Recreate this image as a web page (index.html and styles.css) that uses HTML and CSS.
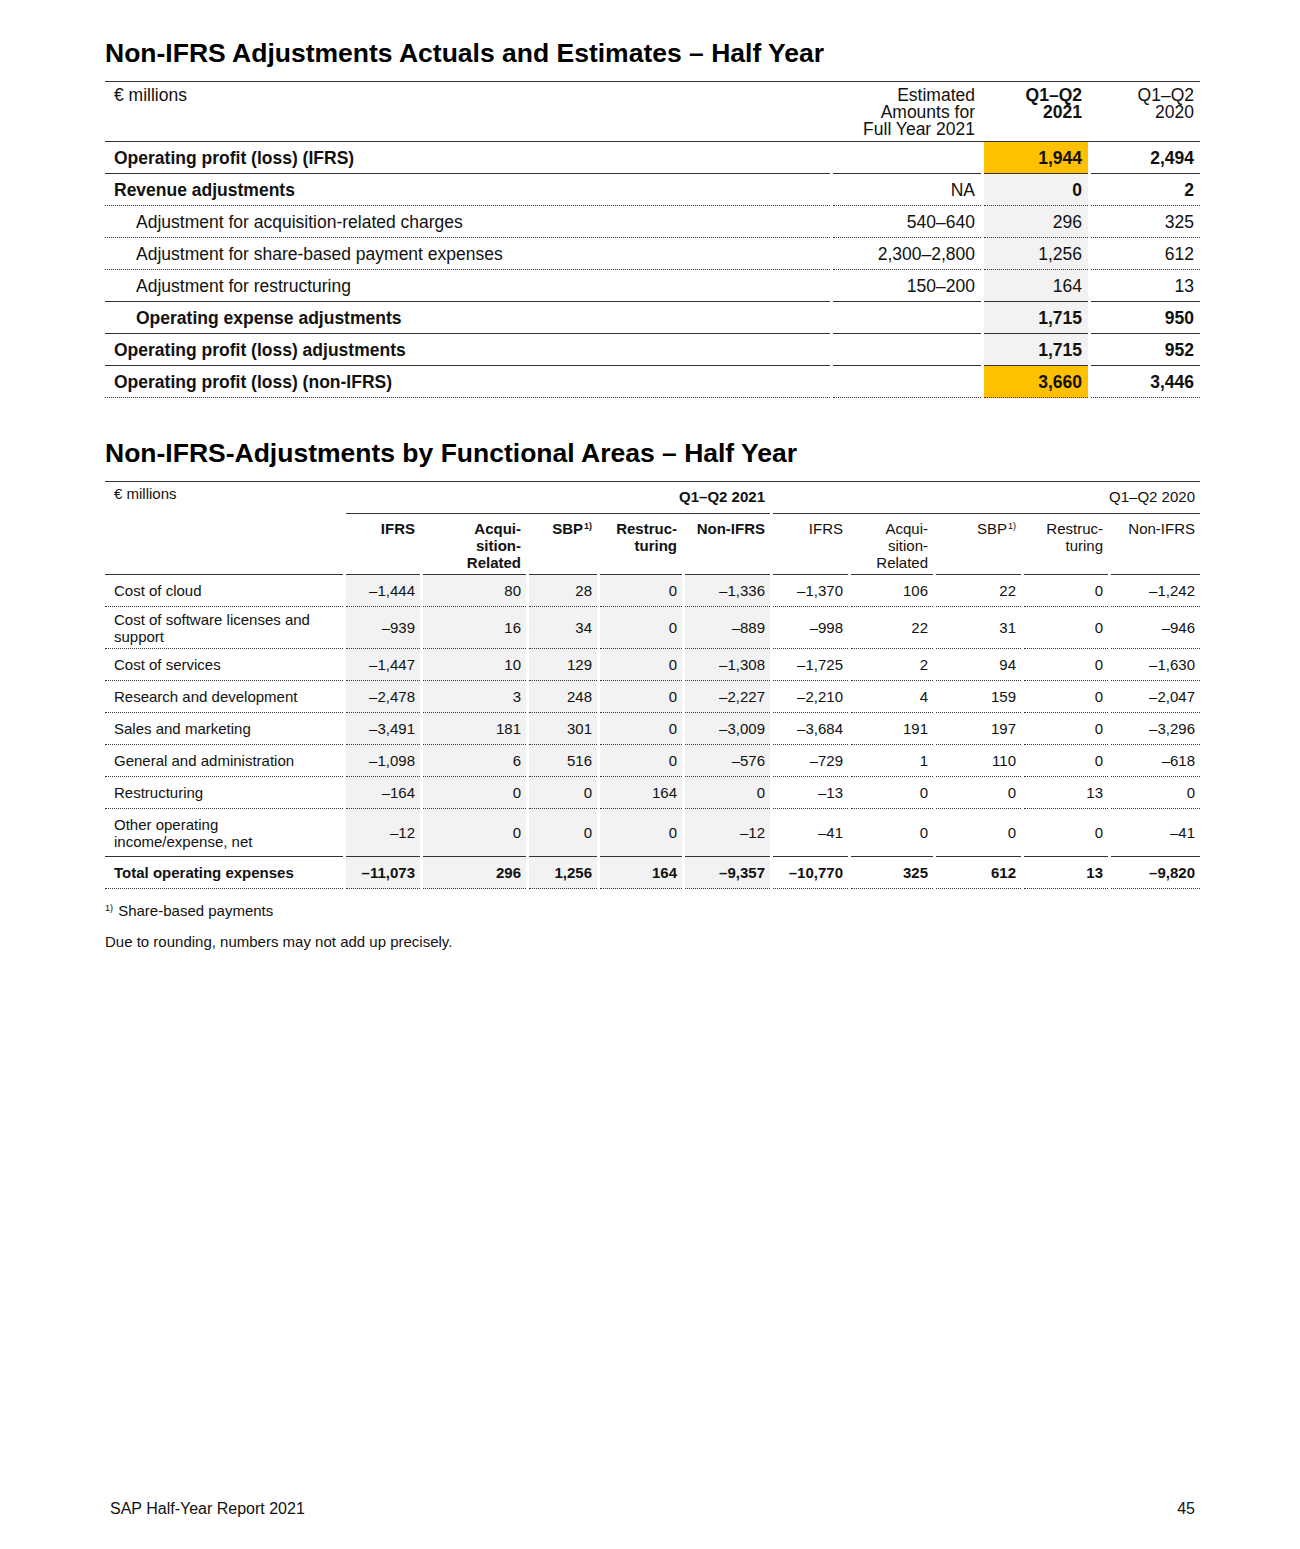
FILE: index.html
```html
<!DOCTYPE html>
<html lang="en">
<head>
<meta charset="utf-8">
<title>SAP Half-Year Report 2021 – Non-IFRS Adjustments</title>
<link rel="stylesheet" href="styles.css">
</head>
<body>
<main class="page">
  <section class="block">
    <h1 class="title">Non-IFRS Adjustments Actuals and Estimates – Half Year</h1>
    <div class="t1">
      <div class="t1-head">
        <div class="cell lbl">€ millions</div>
        <div class="cell num">Estimated<br>Amounts for<br>Full Year 2021</div>
        <div class="cell num b">Q1–Q2<br>2021</div>
        <div class="cell num">Q1–Q2<br>2020</div>
      </div>
      <div class="t1-row solid b">
        <div class="cell lbl">Operating profit (loss) (IFRS)</div>
        <div class="cell num"></div>
        <div class="cell num hl">1,944</div>
        <div class="cell num">2,494</div>
      </div>
      <div class="t1-row dotted b">
        <div class="cell lbl">Revenue adjustments</div>
        <div class="cell num r">NA</div>
        <div class="cell num">0</div>
        <div class="cell num">2</div>
      </div>
      <div class="t1-row dotted">
        <div class="cell lbl ind">Adjustment for acquisition-related charges</div>
        <div class="cell num">540–640</div>
        <div class="cell num">296</div>
        <div class="cell num">325</div>
      </div>
      <div class="t1-row dotted">
        <div class="cell lbl ind">Adjustment for share-based payment expenses</div>
        <div class="cell num">2,300–2,800</div>
        <div class="cell num">1,256</div>
        <div class="cell num">612</div>
      </div>
      <div class="t1-row solid">
        <div class="cell lbl ind">Adjustment for restructuring</div>
        <div class="cell num">150–200</div>
        <div class="cell num">164</div>
        <div class="cell num">13</div>
      </div>
      <div class="t1-row solid b">
        <div class="cell lbl ind">Operating expense adjustments</div>
        <div class="cell num"></div>
        <div class="cell num">1,715</div>
        <div class="cell num">950</div>
      </div>
      <div class="t1-row solid b">
        <div class="cell lbl">Operating profit (loss) adjustments</div>
        <div class="cell num"></div>
        <div class="cell num">1,715</div>
        <div class="cell num">952</div>
      </div>
      <div class="t1-row dotted b">
        <div class="cell lbl">Operating profit (loss) (non-IFRS)</div>
        <div class="cell num"></div>
        <div class="cell num hl">3,660</div>
        <div class="cell num">3,446</div>
      </div>
    </div>
  </section>

  <section class="block second">
    <h1 class="title">Non-IFRS-Adjustments by Functional Areas – Half Year</h1>
    <div class="t2">
      <div class="t2-head">
        <div class="cell lbl corner">€ millions</div>
        <div class="cell num grp grp1 b">Q1–Q2 2021</div>
        <div class="cell num grp grp2">Q1–Q2 2020</div>
        <div class="cell num colh b">IFRS</div>
        <div class="cell num colh b">Acqui-<br>sition-<br>Related</div>
        <div class="cell num colh b">SBP<sup>1)</sup></div>
        <div class="cell num colh b">Restruc-<br>turing</div>
        <div class="cell num colh b">Non-IFRS</div>
        <div class="cell num colh">IFRS</div>
        <div class="cell num colh">Acqui-<br>sition-<br>Related</div>
        <div class="cell num colh">SBP<sup>1)</sup></div>
        <div class="cell num colh">Restruc-<br>turing</div>
        <div class="cell num colh">Non-IFRS</div>
      </div>
      <div class="t2-body">
        <div class="t2-row first">
          <div class="cell lbl">Cost of cloud</div>
          <div class="cell num">–1,444</div><div class="cell num">80</div><div class="cell num">28</div><div class="cell num">0</div><div class="cell num">–1,336</div>
          <div class="cell num">–1,370</div><div class="cell num">106</div><div class="cell num">22</div><div class="cell num">0</div><div class="cell num">–1,242</div>
        </div>
        <div class="t2-row two tight">
          <div class="cell lbl">Cost of software licenses and<br>support</div>
          <div class="cell num">–939</div><div class="cell num">16</div><div class="cell num">34</div><div class="cell num">0</div><div class="cell num">–889</div>
          <div class="cell num">–998</div><div class="cell num">22</div><div class="cell num">31</div><div class="cell num">0</div><div class="cell num">–946</div>
        </div>
        <div class="t2-row">
          <div class="cell lbl">Cost of services</div>
          <div class="cell num">–1,447</div><div class="cell num">10</div><div class="cell num">129</div><div class="cell num">0</div><div class="cell num">–1,308</div>
          <div class="cell num">–1,725</div><div class="cell num">2</div><div class="cell num">94</div><div class="cell num">0</div><div class="cell num">–1,630</div>
        </div>
        <div class="t2-row">
          <div class="cell lbl">Research and development</div>
          <div class="cell num">–2,478</div><div class="cell num">3</div><div class="cell num">248</div><div class="cell num">0</div><div class="cell num">–2,227</div>
          <div class="cell num">–2,210</div><div class="cell num">4</div><div class="cell num">159</div><div class="cell num">0</div><div class="cell num">–2,047</div>
        </div>
        <div class="t2-row">
          <div class="cell lbl">Sales and marketing</div>
          <div class="cell num">–3,491</div><div class="cell num">181</div><div class="cell num">301</div><div class="cell num">0</div><div class="cell num">–3,009</div>
          <div class="cell num">–3,684</div><div class="cell num">191</div><div class="cell num">197</div><div class="cell num">0</div><div class="cell num">–3,296</div>
        </div>
        <div class="t2-row">
          <div class="cell lbl">General and administration</div>
          <div class="cell num">–1,098</div><div class="cell num">6</div><div class="cell num">516</div><div class="cell num">0</div><div class="cell num">–576</div>
          <div class="cell num">–729</div><div class="cell num">1</div><div class="cell num">110</div><div class="cell num">0</div><div class="cell num">–618</div>
        </div>
        <div class="t2-row">
          <div class="cell lbl">Restructuring</div>
          <div class="cell num">–164</div><div class="cell num">0</div><div class="cell num">0</div><div class="cell num">164</div><div class="cell num">0</div>
          <div class="cell num">–13</div><div class="cell num">0</div><div class="cell num">0</div><div class="cell num">13</div><div class="cell num">0</div>
        </div>
        <div class="t2-row two solid">
          <div class="cell lbl">Other operating<br>income/expense, net</div>
          <div class="cell num">–12</div><div class="cell num">0</div><div class="cell num">0</div><div class="cell num">0</div><div class="cell num">–12</div>
          <div class="cell num">–41</div><div class="cell num">0</div><div class="cell num">0</div><div class="cell num">0</div><div class="cell num">–41</div>
        </div>
        <div class="t2-row total b">
          <div class="cell lbl">Total operating expenses</div>
          <div class="cell num">–11,073</div><div class="cell num">296</div><div class="cell num">1,256</div><div class="cell num">164</div><div class="cell num">–9,357</div>
          <div class="cell num">–10,770</div><div class="cell num">325</div><div class="cell num">612</div><div class="cell num">13</div><div class="cell num">–9,820</div>
        </div>
      </div>
    </div>
    <div class="notes">
      <p class="note"><sup>1)</sup> Share-based payments</p>
      <p class="note">Due to rounding, numbers may not add up precisely.</p>
    </div>
  </section>

  <footer class="footer">
    <span class="footer-title">SAP Half-Year Report 2021</span>
    <span class="footer-page">45</span>
  </footer>
</main>
</body>
</html>
```

FILE: styles.css
```css
* {
  box-sizing: border-box;
}

html,
body {
  margin: 0;
  padding: 0;
  background: #ffffff;
}

body {
  font-family: "Liberation Sans", Arial, sans-serif;
  color: #111111;
}

.page {
  width: 1300px;
  min-height: 1549px;
  padding: 38px 100px 30px 105px;
  display: flex;
  flex-direction: column;
}

.title {
  margin: 0 0 13px;
  font-size: 26.5px;
  line-height: 30px;
  font-weight: 700;
  color: #000000;
}

.second {
  margin-top: 40px;
}

.b {
  font-weight: 700;
}

.r {
  font-weight: 400;
}

.cell {
  white-space: nowrap;
}

.num {
  text-align: right;
}

/* ---------- Table 1 ---------- */
.t1 {
  width: 1095px;
  border-top: 1px solid #333333;
  font-size: 17.5px;
}

.t1-head,
.t1-row {
  display: grid;
  grid-template-columns: 725px 148px 104px 109px;
  column-gap: 3px;
}

.t1-head {
  height: 60px;
  border-bottom: 1px solid #333333;
  line-height: 17px;
}

.t1-head .cell {
  padding: 5px 6px 0;
}

.t1-head .lbl {
  padding-left: 9px;
}

.t1-row .cell {
  padding: 5.5px 6px;
  line-height: 20px;
  border-bottom: 1px solid #333333;
}

.t1-row.dotted .cell {
  border-bottom-style: dotted;
}

.t1-row .cell:nth-child(3) {
  background: #f2f2f2;
}

.t1-row .cell.hl {
  background: #ffc000;
}

.t1-row .lbl {
  padding-left: 9px;
}

.t1-row .lbl.ind {
  padding-left: 31px;
}

/* ---------- Table 2 ---------- */
.t2 {
  width: 1095px;
  font-size: 15px;
  line-height: 17px;
}

.t2-head,
.t2-row {
  display: grid;
  grid-template-columns: 238px 74px 103px 68px 82px 85px 75px 82px 85px 84px 89px;
  column-gap: 3px;
}

.t2-head {
  border-top: 1px solid #333333;
  grid-template-rows: 32px 61px;
}

.t2-head .cell {
  border-bottom: 1px solid #333333;
  padding: 6px 5px 0;
}

.t2-head .corner {
  grid-row: 1 / span 2;
  grid-column: 1;
  padding: 3px 5px 0 9px;
}

.t2-head .grp {
  padding-top: 6px;
}

.t2-head .grp1 {
  grid-column: 2 / span 5;
}

.t2-head .grp2 {
  grid-column: 7 / span 5;
}

sup {
  font-size: 9px;
  line-height: 0;
  vertical-align: 5px;
  margin-left: 1px;
}

.t2-row .cell {
  padding: 7px 5px;
  border-bottom: 1px dotted #333333;
}

.t2-row.first .cell {
  border-top: 1px solid #333333;
}

.t2-row.first {
  margin-top: -1px;
}

.t2-row.two .num {
  display: flex;
  align-items: center;
  justify-content: flex-end;
}

.t2-row.two .cell {
  padding-top: 6.5px;
  padding-bottom: 6.5px;
}

.t2-row.tight .cell {
  padding-top: 3.5px;
  padding-bottom: 3.5px;
}

.t2-row.solid .cell {
  border-bottom-style: solid;
}

.t2-row .lbl {
  padding-left: 9px;
}

.t2-row .cell:nth-child(n+2):nth-child(-n+6) {
  background: #f2f2f2;
}

/* ---------- Notes ---------- */
.notes {
  margin-top: 12px;
  font-size: 15px;
  line-height: 20px;
}

.note {
  margin: 0 0 11px;
}

.note sup {
  margin-left: 0;
  margin-right: 1px;
}

/* ---------- Footer ---------- */
.footer {
  margin-top: auto;
  display: flex;
  justify-content: space-between;
  padding: 0 5px;
  font-family: "Liberation Sans", Arial, sans-serif;
  font-size: 16px;
  line-height: 20px;
  color: #111111;
}
```
